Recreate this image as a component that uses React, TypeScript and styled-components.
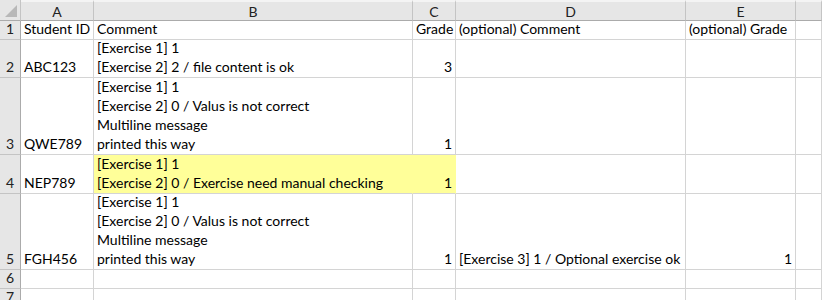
import React from 'react';
import styled, {createGlobalStyle} from 'styled-components';

const GlobalStyle = createGlobalStyle`
  html, body {
    margin: 0;
    padding: 0;
    background: #ffffff;
  }
  body {
    font-family: Lato, "Open Sans", sans-serif;
    color: #000000;
  }
`;

const COLS = ['A', 'B', 'C', 'D', 'E', ''];
const ROW_HEIGHTS = [21, 19, 38, 77, 39, 76, 19, 19];

type Cell = {
  text?: string[];
  num?: boolean;
  highlight?: boolean;
};

type Row = {id: number; cells: Cell[]};

const rows: Row[] = [
  {
    id: 1,
    cells: [
      {text: ['Student ID']},
      {text: ['Comment']},
      {text: ['Grade']},
      {text: ['(optional) Comment']},
      {text: ['(optional) Grade']},
      {},
    ],
  },
  {
    id: 2,
    cells: [
      {text: ['ABC123']},
      {text: ['[Exercise 1] 1', '[Exercise 2] 2 / file content is ok']},
      {text: ['3'], num: true},
      {},
      {},
      {},
    ],
  },
  {
    id: 3,
    cells: [
      {text: ['QWE789']},
      {
        text: [
          '[Exercise 1] 1',
          '[Exercise 2] 0 / Valus is not correct',
          'Multiline message',
          'printed this way',
        ],
      },
      {text: ['1'], num: true},
      {},
      {},
      {},
    ],
  },
  {
    id: 4,
    cells: [
      {text: ['NEP789']},
      {text: ['[Exercise 1] 1', '[Exercise 2] 0 / Exercise need manual checking'], highlight: true},
      {text: ['1'], num: true, highlight: true},
      {},
      {},
      {},
    ],
  },
  {
    id: 5,
    cells: [
      {text: ['FGH456']},
      {
        text: [
          '[Exercise 1] 1',
          '[Exercise 2] 0 / Valus is not correct',
          'Multiline message',
          'printed this way',
        ],
      },
      {text: ['1'], num: true},
      {text: ['[Exercise 3] 1 / Optional exercise ok']},
      {text: ['1'], num: true},
      {},
    ],
  },
  {id: 6, cells: [{}, {}, {}, {}, {}, {}]},
  {id: 7, cells: [{}, {}, {}, {}, {}, {}]},
];

const Sheet = styled.div`
  display: grid;
  grid-template-columns: 21px 73px 319px 43px 230px 110px 1fr;
  grid-template-rows: ${ROW_HEIGHTS.map((h) => `${h}px`).join(' ')};
  width: 822px;
  height: 300px;
  overflow: hidden;
  font-size: 14px;
`;

const Corner = styled.div`
  position: relative;
  background: #e6e6e6;
  border-right: 1px solid #c4c4c4;
  border-bottom: 1px solid #ababab;
  box-sizing: border-box;
`;

const CornerTriangle = styled.div`
  position: absolute;
  right: 3px;
  bottom: 3px;
  width: 0;
  height: 0;
  border-left: 12px solid transparent;
  border-bottom: 12px solid #b8b8b8;
`;

const ColHead = styled.div`
  display: flex;
  align-items: center;
  justify-content: center;
  background: #e6e6e6;
  border-top: 2px solid #f4f4f4;
  border-right: 1px solid #c4c4c4;
  border-bottom: 1px solid #ababab;
  box-sizing: border-box;
  font-size: 14px;
  color: #222;
`;

const RowHead = styled.div`
  display: flex;
  align-items: flex-end;
  justify-content: center;
  padding-bottom: 1px;
  background: #e6e6e6;
  border-right: 1px solid #ababab;
  border-bottom: 1px solid #c4c4c4;
  box-sizing: border-box;
  line-height: 18px;
  color: #222;
`;

const DataCell = styled.div<{$num?: boolean; $hl?: boolean}>`
  display: flex;
  flex-direction: column;
  justify-content: flex-end;
  align-items: ${(p) => (p.$num ? 'flex-end' : 'flex-start')};
  padding: 0 3px 1px 3px;
  background: ${(p) => (p.$hl ? '#ffff99' : '#ffffff')};
  border-right: 1px solid ${(p) => (p.$hl ? '#ffff99' : '#d4d4d4')};
  border-bottom: 1px solid #d4d4d4;
  box-sizing: border-box;
  white-space: nowrap;
  overflow: visible;
  line-height: 19px;
`;

const Line = styled.span`
  display: block;
`;

const App: React.FC = () => {
  return (
    <>
      <GlobalStyle />
      <Sheet>
        <Corner>
          <CornerTriangle />
        </Corner>
        {COLS.map((c, i) => (
          <ColHead key={`h${i}`}>{c}</ColHead>
        ))}
        {rows.map((row) => (
          <React.Fragment key={row.id}>
            <RowHead>{row.id}</RowHead>
            {row.cells.map((cell, i) => (
              <DataCell key={i} $num={cell.num} $hl={cell.highlight}>
                {cell.text?.map((t, j) => (
                  <Line key={j}>{t}</Line>
                ))}
              </DataCell>
            ))}
          </React.Fragment>
        ))}
      </Sheet>
    </>
  );
};

export default App;
